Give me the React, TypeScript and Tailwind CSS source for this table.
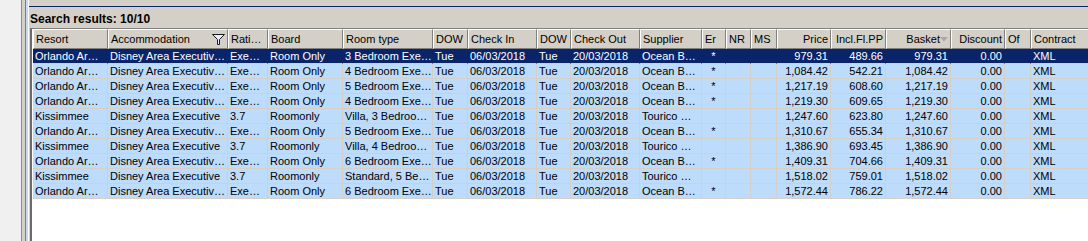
import React from "react"

type Col = { label: string; w: string; right?: boolean; center?: boolean }

const cols: Col[] = [
  { label: "Resort", w: "w-[75px]" },
  { label: "Accommodation", w: "w-[120px]" },
  { label: "Rati…", w: "w-[40px]" },
  { label: "Board", w: "w-[75px]" },
  { label: "Room type", w: "w-[90px]" },
  { label: "DOW", w: "w-[35px]" },
  { label: "Check In", w: "w-[69px]" },
  { label: "DOW", w: "w-[34px]" },
  { label: "Check Out", w: "w-[69px]" },
  { label: "Supplier", w: "w-[62px]" },
  { label: "Er", w: "w-[24px]", center: true },
  { label: "NR", w: "w-[25px]" },
  { label: "MS", w: "w-[26px]" },
  { label: "Price", w: "w-[54px]", right: true },
  { label: "Incl.Fl.PP", w: "w-[55px]", right: true },
  { label: "Basket", w: "w-[65px]", right: true },
  { label: "Discount", w: "w-[54px]", right: true },
  { label: "Of", w: "w-[26px]" },
  { label: "Contract", w: "w-[90px]" },
]

const ocean = (room: string, p: string, pp: string) => [
  "Orlando Ar…", "Disney Area Executiv…", "Exe…", "Room Only", room, "Tue", "06/03/2018", "Tue", "20/03/2018",
  "Ocean B…", "*", "", "", p, pp, p, "0.00", "", "XML",
]
const tourico = (room: string, p: string, pp: string) => [
  "Kissimmee", "Disney Area Executive", "3.7", "Roomonly", room, "Tue", "06/03/2018", "Tue", "20/03/2018",
  "Tourico …", "", "", "", p, pp, p, "0.00", "", "XML",
]

const rows = [
  ocean("3 Bedroom Exe…", "979.31", "489.66"),
  ocean("4 Bedroom Exe…", "1,084.42", "542.21"),
  ocean("5 Bedroom Exe…", "1,217.19", "608.60"),
  ocean("4 Bedroom Exe…", "1,219.30", "609.65"),
  tourico("Villa, 3 Bedroo…", "1,247.60", "623.80"),
  ocean("5 Bedroom Exe…", "1,310.67", "655.34"),
  tourico("Villa, 4 Bedroo…", "1,386.90", "693.45"),
  ocean("6 Bedroom Exe…", "1,409.31", "704.66"),
  tourico("Standard, 5 Be…", "1,518.02", "759.01"),
  ocean("6 Bedroom Exe…", "1,572.44", "786.22"),
]

function Funnel() {
  return (
    <svg width="13" height="11" viewBox="0 0 13 11" className="shrink-0">
      <polygon points="0.5,0.5 12.5,0.5 7.5,5.5 7.5,10.5 5.5,10.5 5.5,5.5" fill="#e8f0fb" stroke="#1a1a1a" />
    </svg>
  )
}

function SortDown() {
  return (
    <svg width="8" height="5" viewBox="0 0 8 5" className="shrink-0">
      <polygon points="0,0 8,0 4,4.5" fill="#a8a8a8" />
    </svg>
  )
}

function Header() {
  return (
    <div className="flex h-[20px] shrink-0">
      {cols.map((c, i) => (
        <div
          key={i}
          className={`${c.w} shrink-0 flex items-center border-l border-t border-l-white border-t-white border-r border-b border-r-[#808080] border-b-[#808080] bg-[#d4d0c8] px-[2px] overflow-hidden whitespace-nowrap ${
            c.right ? "justify-end" : "justify-start"
          }`}
        >
          {c.label === "Accommodation" ? (
            <>
              <span className="flex-1">{c.label}</span>
              <Funnel />
            </>
          ) : c.label === "Basket" ? (
            <>
              <span>{c.label}</span>
              <SortDown />
            </>
          ) : (
            <span>{c.label}</span>
          )}
        </div>
      ))}
    </div>
  )
}

function Row({ cells, selected }: { cells: string[]; selected: boolean }) {
  return (
    <div className={`flex h-[15px] shrink-0 ${selected ? "bg-[#0a246a] text-white" : "bg-[#bddbfb] text-black"}`}>
      {cells.map((t, i) => {
        const c = cols[i]
        return (
          <div
            key={i}
            className={`${c.w} shrink-0 flex items-center border-r border-b ${
              selected ? "border-r-[#0a246a] border-b-[#d4d0c8]" : "border-r-[#d4d0c8] border-b-[#d4d0c8]"
            } px-[2px] overflow-hidden whitespace-nowrap ${
              c.right ? "justify-end" : c.center ? "justify-center" : "justify-start"
            }`}
          >
            {t}
          </div>
        )
      })}
    </div>
  )
}

export default function App() {
  return (
    <div className="w-[1088px] h-[241px] flex overflow-hidden bg-[#d4d0c8] font-['Liberation_Sans',Arial,sans-serif] text-[11px] leading-[14px] text-black">
      <div className="w-[21px] shrink-0 bg-[#f0f0f0]" />
      <div className="w-px shrink-0 bg-[#8c8c8c]" />
      <div className="w-[3px] shrink-0 bg-[#d4d0c8]" />
      <div className="w-px shrink-0 bg-[#808080]" />
      <div className="w-[2px] shrink-0 bg-[#c4d8ee]" />
      <div className="w-px shrink-0 bg-white" />
      <div className="flex-1 min-w-0 flex flex-col">
        <div className="h-[6px] shrink-0" />
        <div className="h-px shrink-0 bg-[#0a246a]" />
        <div className="h-[21px] shrink-0 flex items-center pl-[1px] pt-[3px] font-bold text-[12px]">
          Search results: 10/10
        </div>
        <div className="flex-1 min-h-0 flex flex-col ml-[1px] border-l-2 border-t border-l-[#6b6b6b] border-t-[#808080] bg-white pl-px overflow-hidden">
          <Header />
          {rows.map((r, i) => (
            <Row key={i} cells={r} selected={i === 0} />
          ))}
        </div>
      </div>
    </div>
  )
}
